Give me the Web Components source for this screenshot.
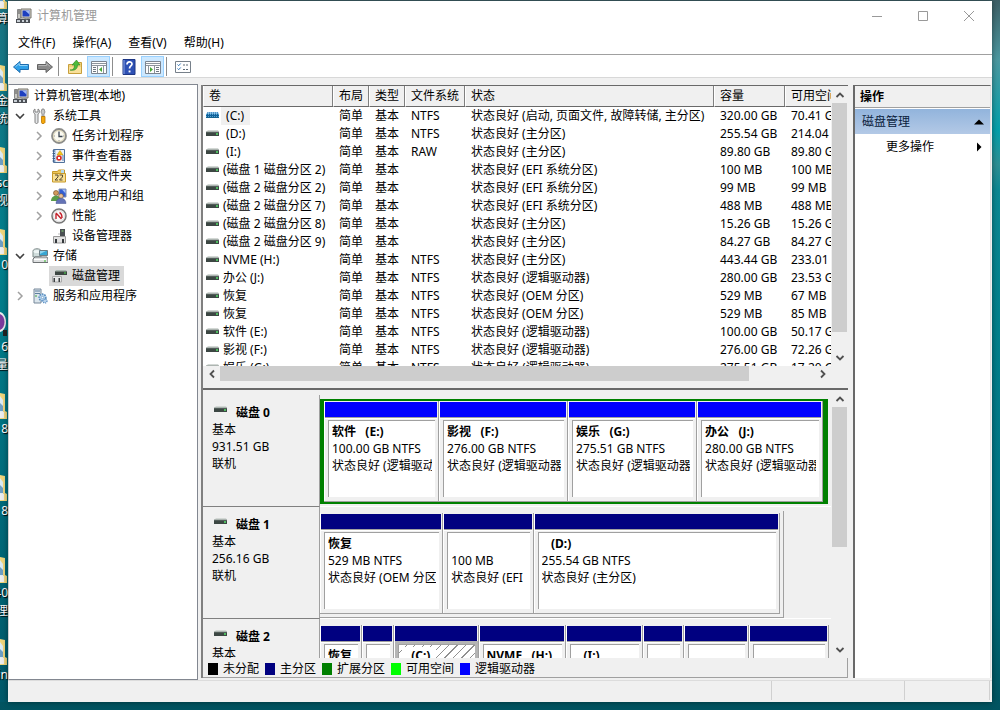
<!DOCTYPE html>
<html lang="zh-CN">
<head>
<meta charset="utf-8">
<title>计算机管理</title>
<style>
html, body { margin: 0; height: 100%; }
body {
  font: 12px/18px "Noto Sans", "Noto Sans CJK SC", sans-serif;
  color: #000;
  overflow: hidden;
}
</style>
</head>
<body>
<desk-top>
  <desk-shortcut slot="shortcuts">算</desk-shortcut>
  <desk-shortcut slot="shortcuts">金<br>统</desk-shortcut>
  <desk-shortcut slot="shortcuts">sc<br>视</desk-shortcut>
  <desk-shortcut slot="shortcuts">10</desk-shortcut>
  <desk-shortcut slot="shortcuts" kind="disc">6<br>量</desk-shortcut>
  <desk-shortcut slot="shortcuts">8</desk-shortcut>
  <desk-shortcut slot="shortcuts">8</desk-shortcut>
  <desk-shortcut slot="shortcuts">40<br>理</desk-shortcut>
  <desk-shortcut slot="shortcuts">in</desk-shortcut>
  <mmc-window>
    <title-bar slot="top">计算机管理</title-bar>
    <menu-bar slot="top"></menu-bar>
    <tool-bar slot="top"></tool-bar>
    <console-tree slot="tree">
      <tree-item icon="computer" level="0">计算机管理(本地)</tree-item>
      <tree-item icon="tools" level="1" state="open">系统工具</tree-item>
      <tree-item icon="clock" level="2" state="closed">任务计划程序</tree-item>
      <tree-item icon="events" level="2" state="closed">事件查看器</tree-item>
      <tree-item icon="share" level="2" state="closed">共享文件夹</tree-item>
      <tree-item icon="users" level="2" state="closed">本地用户和组</tree-item>
      <tree-item icon="perf" level="2" state="closed">性能</tree-item>
      <tree-item icon="devices" level="2">设备管理器</tree-item>
      <tree-item icon="storage" level="1" state="open">存储</tree-item>
      <tree-item icon="diskmgmt" level="2" selected>磁盘管理</tree-item>
      <tree-item icon="services" level="1" state="closed">服务和应用程序</tree-item>
    </console-tree>
    <volume-list slot="main"></volume-list>
    <disk-graph slot="main">
      <disk-row name="磁盘 0" size="931.51 GB" layout="extended">
        <disk-volume kind="logical" share="115" name="软件   (E:)" size="100.00 GB NTFS" status="状态良好 (逻辑驱动器)"></disk-volume>
        <disk-volume kind="logical" share="129" name="影视   (F:)" size="276.00 GB NTFS" status="状态良好 (逻辑驱动器)"></disk-volume>
        <disk-volume kind="logical" share="129" name="娱乐   (G:)" size="275.51 GB NTFS" status="状态良好 (逻辑驱动器)"></disk-volume>
        <disk-volume kind="logical" share="126" name="办公   (J:)" size="280.00 GB NTFS" status="状态良好 (逻辑驱动器)"></disk-volume>
      </disk-row>
      <disk-row name="磁盘 1" size="256.16 GB" layout="short">
        <disk-volume share="123" name="恢复" size="529 MB NTFS" status="状态良好 (OEM 分区)"></disk-volume>
        <disk-volume share="90" name=" " size="100 MB" status="状态良好 (EFI "></disk-volume>
        <disk-volume share="247" name="   (D:)" size="255.54 GB NTFS" status="状态良好 (主分区)"></disk-volume>
      </disk-row>
      <disk-row name="磁盘 2" layout="full">
        <disk-volume share="42" name="恢复"></disk-volume>
        <disk-volume share="31"></disk-volume>
        <disk-volume share="85" name="   (C:)" selected></disk-volume>
        <disk-volume share="88" name="NVME   (H:)"></disk-volume>
        <disk-volume share="77" name="   (I:)"></disk-volume>
        <disk-volume share="41"></disk-volume>
        <disk-volume share="65"></disk-volume>
        <disk-volume share="80"></disk-volume>
      </disk-row>
    </disk-graph>
    <action-pane slot="actions"></action-pane>
  </mmc-window>
</desk-top>

<script>
function define(name, html, setup) {
  const template = document.createElement('template');
  template.innerHTML = html.trim();
  customElements.define(name, class extends HTMLElement {
    connectedCallback() {
      if (this.shadowRoot) return;
      this.attachShadow({ mode: 'open' }).append(template.content.cloneNode(true));
      if (setup) setup(this, this.shadowRoot);
    }
  });
}

const ICONS = {
  computer: `<path d="M5 1h10v9H5z" fill="#d8d4c8" stroke="#77756c"/><path d="M6.500 2.500h7v6h-7z" fill="#1d3fc0"/><path d="M9 2.500h4.500v4z" fill="#9fb8f2"/><path d="M1.500 1.500h3v9h-3z" fill="#c9c9c4" stroke="#888"/><path d="M2 3h2M2 5h2" stroke="#555"/><path d="M0 11h14v4H0z" fill="#4b4f55"/><path d="M1 12h3v2H1zM6 12h2v2H6zM10 12h2v2h-2z" fill="#c9d0d6"/><path d="M7 9l3 2 4-1" stroke="#8a8d90" fill="none"/>`,
  tools: `<path d="M3 1C1 2 1 5 3 6v8c0 2 3 2 3 0V6c2-1 2-4 0-5v3H3z" fill="#e4e6e8" stroke="#777" stroke-width=".9"/><path d="M10 1h2l1 3-1 2v3h-2V6L9 4z" fill="#c8c8c8" stroke="#777" stroke-width=".7"/><path d="M9.500 8.500h3.500v6l-1 1h-2l-.5-1z" fill="#f5a70b" stroke="#b97500" stroke-width=".8"/>`,
  clock: `<circle cx="8" cy="8" r="7" fill="#f5f1df" stroke="#8d8d8a" stroke-width="1.800"/><circle cx="8" cy="8" r="5.500" fill="#fbfaf1" stroke="#c7bd96" stroke-width=".6"/><path d="M8 3.500V8.500h3.500" fill="none" stroke="#3b4653" stroke-width="1.300"/><path d="M3 8h1M12 8h1M8 12v1" stroke="#999"/>`,
  events: `<path d="M2.500 1.500h11v13h-11z" fill="#b9d0e9" stroke="#50719b"/><path d="M5 2h8v12H5z" fill="#eef2f7"/><path d="M1.500 3h2.500M1.500 5.500h2.500M1.500 8h2.500M1.500 10.500h2.500M1.500 13h2.500" stroke="#3c5c88"/><path d="M9 2.500l3 4.500H6z" fill="#f3c61c" stroke="#b68900" stroke-width=".5"/><circle cx="8" cy="10" r="2.800" fill="#d8302d"/><path d="M7 9l2 2M9 9l-2 2" stroke="#fff"/><path d="M11 8h2M11 10h2M11 12h2" stroke="#557ab5"/>`,
  share: `<path d="M1.500 3.500h5l1-1.500h6v11.500h-12z" fill="#ecc65b" stroke="#c79a2b"/><path d="M1.500 5.500h13v8.500h-13z" fill="#f8df93" stroke="#c79a2b"/><path d="M10 2h3v3h-3z" fill="#b4d9ec"/><path d="M4 7h3v2l-3 3h3M8.500 7h3v2l-3 3h3" stroke="#564b35" fill="none"/>`,
  users: `<path d="M8 1h7v8H8z" fill="#345fd4" stroke="#8190b0"/><path d="M11 1.500h3.500v4z" fill="#a3c0f5"/><circle cx="5" cy="5" r="2.500" fill="#d29a5c" stroke="#644425" stroke-width=".6"/><path d="M0 13c0-7 10-7 10 0z" fill="#5a9c49"/><circle cx="10" cy="8" r="2.300" fill="#edc49b" stroke="#76532c" stroke-width=".6"/><path d="M5 15.500c0-7 10-7 10 0z" fill="#6473b6" stroke="#43528f" stroke-width=".5"/>`,
  perf: `<circle cx="8" cy="8" r="7" fill="#fff" stroke="#777" stroke-width="1.500"/><circle cx="8" cy="8" r="5.500" fill="#fafafa" stroke="#b8b8b8" stroke-width=".5"/><path d="M5 11V5.500M5 5l5.500 6M8.500 4.500c2 1 2.500 3 2.500 5.500" fill="none" stroke="#c3202b" stroke-width="1.400"/>`,
  devices: `<path d="M9 1h5v7H9z" fill="#4b5053"/><path d="M10.500 3h2" stroke="#8ee07c"/><path d="M2.500 8.500h12v6.500h-12z" fill="#e2e2e2" stroke="#9a9a9a"/><path d="M4 11h2v4H4zM11 11h2v4h-2z" fill="#34383c"/><path d="M7 6h2" stroke="#bbb"/>`,
  storage: `<path d="M1 3c0-3 8-3 8 0v6H1z" fill="#cfdcdb" stroke="#7f8b8b"/><ellipse cx="5" cy="3.500" rx="3.500" ry="1.500" fill="#eef5f5"/><path d="M7.500 2.500h8v5h-8z" fill="#37a6d3" stroke="#6a7c84"/><path d="M8 3h6l-6 3z" fill="#8fd4ee"/><path d="M3 9h12l1 2v3.500H1V11z" fill="#dfe1e2" stroke="#6e7274"/><path d="M2 11.500h12" stroke="#fff"/><path d="M12 13h2" stroke="#34b82c"/>`,
  diskmgmt: `<path d="M4 3h12v4H4z" fill="#3c4541"/><path d="M5 2h10l1 1.500H4z" fill="#a9b5ae"/><path d="M13 5h2" stroke="#4fdc4f"/><path d="M1.500 8.500h9v5.500h-9z" fill="#e7e7e7" stroke="#aaa"/><path d="M2.500 10h1.500v4H2.500zM7.500 10h1.500v4H7.500z" fill="#3b3e40"/>`,
  services: `<path d="M2 1h7v14H2z" fill="#dbe5ec" stroke="#76889a"/><path d="M3 3h5M3 5.500h5" stroke="#5e7f9f"/><path d="M3 8h2" stroke="#3da63d"/><circle cx="10.500" cy="9.500" r="3.400" fill="#b7d3ec" stroke="#5389bd" stroke-width="1.500" stroke-dasharray="1.500 1"/><circle cx="10.500" cy="9.500" r="1.200" fill="#fff" stroke="#5389bd" stroke-width=".6"/><circle cx="13" cy="13" r="2" fill="#b7d3ec" stroke="#5389bd" stroke-width="1.200" stroke-dasharray="1 .8"/>`,
  back: `<path d="M0.500 8L7 2.500V5.500h8.500v5H7v3z" fill="#2fa0e8" stroke="#1d6cae"/><path d="M2.500 7.700L6.300 4.500V6.500h8.200" fill="none" stroke="#8fd2f8"/>`,
  forward: `<path d="M15.500 8L9 2.500V5.500H.5v5H9v3z" fill="#8b8b8b" stroke="#626262"/><path d="M1.500 6.500h8.200v-2l3.500 3" fill="none" stroke="#b5b5b5"/>`,
  up: `<path d="M1.500 5.500h5l1-2h7v11h-13z" fill="#f2d27a" stroke="#c79f3c"/><path d="M2 8h12v6H2z" fill="#f8e09a"/><path d="M3 11c3.500 0 4.500-2 4.500-5H5L9.500 1l3.500 5h-2.500C10.500 10 8 12 3 11z" fill="#4dbb3b" stroke="#2c8722" stroke-width=".6"/>`,
  paneLeft: `<path d="M.5 2.500h15v12H.5z" fill="#fdfdfd" stroke="#7b8490"/><path d="M1 4.500h14M1 6.500h14" stroke="#8d949c"/><path d="M2 8.500h3M2 10.500h3M2 12.500h3" stroke="#6f7781"/><path d="M6.500 7v7M12.500 7v7" stroke="#8d949c"/><path d="M11 8v5L8 10.500z" fill="#46a934"/>`,
  paneRight: `<path d="M.5 2.500h15v12H.5z" fill="#fdfdfd" stroke="#7b8490"/><path d="M1 4.500h14M1 6.500h14" stroke="#8d949c"/><path d="M11 8.500h3M11 10.500h3M11 12.500h3" stroke="#6f7781"/><path d="M9.500 7v7M3.500 7v7" stroke="#8d949c"/><path d="M5 8v5l3-2.500z" fill="#46a934"/>`,
  help: `<path d="M2 .5h12v15H2z" fill="#2d50b4" stroke="#1d3684"/><path d="M3 1v14" stroke="#8ba4e4"/><path d="M6 5.500c0-3.500 5-3.500 5-.5 0 2-2.500 2-2.500 4.500" fill="none" stroke="#fff" stroke-width="1.700"/><path d="M7.600 11.500h1.900v1.900H7.600z" fill="#fff"/>`,
  props: `<path d="M.5 2.500h15v11H.5z" fill="#fff" stroke="#77808a"/><path d="M2.500 5.500l1.200 1.200 2-2.200M2.500 9.500l1.200 1.200 2-2.200" fill="none" stroke="#2e75b9"/><path d="M8 6h2M11 6h2M8 10.500h2M11 10.500h2" stroke="#5c6a77"/>`,
  drive: `<path d="M3 4h10l1 2H1z" fill="#d3d8d5"/><path d="M1 6h13v4H1z" fill="#3c4743"/><path d="M1 6h13" stroke="#75807b" stroke-width=".8"/><path d="M11 8h2" stroke="#54e168" stroke-width="1.300"/>`,
  driveSelected: `<path d="M3 4h10l1 2H1z" fill="#8cc4e6"/><path d="M1 6h13v4H1z" fill="#17628f"/><path d="M1 6.500h13M1 8.500h13" stroke="#4da3d8" stroke-dasharray="1 1"/><path d="M2 5h12M2 7.500h12" stroke="#0c5fa8" stroke-dasharray="1 1"/>`,
  chevronDown: `<path d="M4 6l4 4 4-4" fill="none" stroke="#404040" stroke-width="1.600"/>`,
  chevronRight: `<path d="M6 4l4 4-4 4" fill="none" stroke="#a0a0a0" stroke-width="1.500"/>`,
  arrowUp: `<path d="M4.500 10L8 6.500 11.500 10" fill="none" stroke="#505050" stroke-width="1.800"/>`,
  arrowDown: `<path d="M4.500 6L8 9.500 11.500 6" fill="none" stroke="#505050" stroke-width="1.800"/>`,
  arrowLeft: `<path d="M10 4.500L6.500 8l3.500 3.500" fill="none" stroke="#505050" stroke-width="1.800"/>`,
  arrowRight: `<path d="M6 4.500L9.500 8 6 11.500" fill="none" stroke="#505050" stroke-width="1.800"/>`,
  solidUp: `<path d="M8 5.500l5 5H3z" fill="#000"/>`,
  solidRight: `<path d="M6 3.500l4.500 4.500L6 12.500z" fill="#000"/>`,
  minimize: `<path d="M3 8.500h10" stroke="#999"/>`,
  maximize: `<path d="M3.500 3.500h9v9h-9z" fill="none" stroke="#999"/>`,
  close: `<path d="M3 3l10 10M13 3L3 13" stroke="#999"/>`
};

define('mmc-icon', `
<style>:host { display: block; flex: none; width: 16px; height: 16px; } svg { display: block; }</style>`,
(el, root) => {
  root.innerHTML += `<svg width="16" height="16" viewBox="0 0 16 16" aria-hidden="true">${ICONS[el.getAttribute('name')]}</svg>`;
});

define('desk-top', `
<style>
:host {
  display: grid; grid-template-columns: 8px 1fr; box-sizing: border-box; height: 100vh; overflow: hidden;
  padding: 1px 8px 8px 0;
  background: linear-gradient(180deg, #3d5f66 0, #4c99a1 60px, #04a0aa 130px, #2d8f94 165px, #0c8893 190px, #03808c 330px, #017585 480px, #016673 610px, #015360 710px);
}
.icons { min-height: 0; overflow: hidden; margin-top: -19px; background: linear-gradient(#1d7382, #007f8d 40%, #00596a); }
.main { display: grid; min-width: 0; min-height: 0; }
</style>
<div class="icons"><slot name="shortcuts"></slot></div>
<div class="main"><slot></slot></div>`);

define('desk-shortcut', `
<style>
:host { display: flex; flex-direction: column; align-items: flex-end; height: 82px; color: #fff; text-shadow: 1px 1px 1px #000; }
svg { flex: none; display: block; }
.label { text-align: right; white-space: nowrap; }
</style>
<svg width="8" height="28" viewBox="0 0 8 28" aria-hidden="true"></svg>
<div class="label"><slot></slot></div>`,
(el, root) => {
  root.querySelector('svg').innerHTML = el.getAttribute('kind') === 'disc'
    ? `<path d="M0 2c8 2 8 18 0 20z" fill="#eee"/><path d="M0 4c6 2 6 14 0 16z" fill="#7b3c9e"/><path d="M3 20h4v6H3z" fill="#222"/>`
    : `<path d="M0 1l5 1v17l2 1v7H0z" fill="#f1d67c"/><path d="M0 4l3 4v12H0z" fill="#dcebf5"/><path d="M0 11l3 3v5H0z" fill="#6f9fc4"/><path d="M0 20h4v6H0z" fill="#eee"/>`;
});

define('mmc-window', `
<style>
:host { display: flex; flex-direction: column; min-width: 0; min-height: 0; background: #f0f0f0; box-shadow: 0 0 6px rgba(0,0,0,.45); }
.body { flex: 1; display: grid; grid-template-columns: 190px minmax(0, 1fr) 138px; min-height: 0; padding: 6px 1px 0 0; }
.tree, .center, .actions { display: grid; min-width: 0; min-height: 0; }
.center { grid-template-rows: 305fr 288fr; margin: 1px 5px 2px 3px; border-left: 2px solid #808080; }
.actions { margin: 1px 0 2px; }
footer { flex: none; display: flex; justify-content: flex-end; height: 21px; border-top: 1px solid #dcdcdc; background: #f0f0f0; }
footer span { box-sizing: border-box; height: 19px; border-left: 1px solid #d0d0d0; }
.a { width: 133px; } .b { width: 85px; } .c { width: 3px; }
</style>
<slot name="top"></slot>
<div class="body">
  <div class="tree"><slot name="tree"></slot></div>
  <div class="center"><slot name="main"></slot></div>
  <div class="actions"><slot name="actions"></slot></div>
</div>
<footer><span class="a"></span><span class="b"></span><span class="c"></span></footer>`);

define('title-bar', `
<style>
:host { display: flex; align-items: center; flex: none; height: 30px; background: #fff; color: #999; }
.title { flex: 1; margin-left: 5px; }
mmc-icon.app { margin-left: 8px; }
button { display: grid; place-items: center; width: 46px; height: 30px; padding: 0; border: 0; background: none; }
</style>
<mmc-icon class="app" name="computer"></mmc-icon>
<div class="title"><slot></slot></div>
<button aria-label="最小化"><mmc-icon name="minimize"></mmc-icon></button>
<button aria-label="最大化"><mmc-icon name="maximize"></mmc-icon></button>
<button aria-label="关闭"><mmc-icon name="close"></mmc-icon></button>`);

define('menu-bar', `
<style>
:host { display: flex; flex: none; gap: 1px; box-sizing: border-box; height: 24px; padding-left: 2px; background: #fff; border-bottom: 1px solid #a0a0a0; }
button { padding: 0 8px; border: 0; background: none; font: inherit; color: inherit; }
</style>
<button>文件(F)</button><button>操作(A)</button><button>查看(V)</button><button>帮助(H)</button>`);

define('tool-bar', `
<style>
:host { display: flex; flex: none; gap: 1px; box-sizing: border-box; height: 23px; padding: 1px 0 0 1px; background: #fff; border-bottom: 1px solid #d8d8d8; }
button { display: grid; place-items: center; box-sizing: border-box; width: 23px; height: 21px; padding: 0; border: 1px solid transparent; background: none; }
button[aria-pressed] { background: #cce8ff; border-color: #99d1ff; }
i { box-sizing: border-box; width: 5px; height: 19px; border-left: 1px solid #8d8d8d; margin: 1px -1px 0 1px; }
</style>
<button aria-label="后退"><mmc-icon name="back"></mmc-icon></button>
<button aria-label="前进"><mmc-icon name="forward"></mmc-icon></button>
<i></i>
<button aria-label="上移一级"><mmc-icon name="up"></mmc-icon></button>
<button aria-label="显示控制台树" aria-pressed="true"><mmc-icon name="paneLeft"></mmc-icon></button>
<i></i>
<button aria-label="帮助"><mmc-icon name="help"></mmc-icon></button>
<button aria-label="显示操作窗格" aria-pressed="true"><mmc-icon name="paneRight"></mmc-icon></button>
<i></i>
<button aria-label="属性"><mmc-icon name="props"></mmc-icon></button>`);

define('console-tree', `
<style>
:host { display: block; min-height: 0; overflow: hidden; background: #fff; border: 1px solid #828790; border-left-color: #d0d0d0; padding-top: 1px; }
</style>
<slot></slot>`, el => el.setAttribute('role', 'tree'));

define('tree-item', `
<style>
:host { display: flex; align-items: center; height: 20px; }
:host([level="0"]) { padding-left: 4px; }
:host([level="1"]) { padding-left: 3px; }
:host([level="2"]) { padding-left: 22px; }
.twist { flex: none; width: 16px; height: 16px; margin-right: 4px; }
:host([level="0"]) .twist { display: none; }
.node { display: flex; align-items: center; height: 20px; padding: 0 4px 0 0; white-space: nowrap; }
.node span { margin-left: 5px; }
:host([level="2"]) .node { margin-left: -2px; padding-left: 2px; }
:host([selected]) .node { background: #d9d9d9; }
</style>
<div class="twist"></div><div class="node"><mmc-icon></mmc-icon><span><slot></slot></span></div>`,
(el, root) => {
  el.setAttribute('role', 'treeitem');
  const icon = document.createElement('mmc-icon');
  icon.setAttribute('name', el.getAttribute('icon'));
  root.querySelector('mmc-icon').replaceWith(icon);
  const state = el.getAttribute('state');
  if (state) {
    el.setAttribute('aria-expanded', String(state === 'open'));
    root.querySelector('.twist').innerHTML = `<mmc-icon name="${state === 'open' ? 'chevronDown' : 'chevronRight'}"></mmc-icon>`;
  }
});

define('scroll-strip', `
<style>
:host { display: flex; flex-direction: column; width: 17px; min-height: 0; background: #f0f0f0; }
:host([horizontal]) { flex-direction: row; width: auto; height: 16px; }
button { flex: none; display: grid; place-items: center; width: 17px; height: 17px; padding: 0; border: 0; background: none; }
:host([horizontal]) button { height: 16px; }
.track { flex: 1; min-height: 0; min-width: 0; padding: 0 1px; }
:host([horizontal]) .track { padding: 0; }
.thumb { height: var(--extent); background: #cdcdcd; }
:host([horizontal]) .thumb { width: var(--extent); height: 15px; }
</style>`,
(el, root) => {
  const [a, b] = el.hasAttribute('horizontal') ? ['Left', 'Right'] : ['Up', 'Down'];
  root.innerHTML += `<button tabindex="-1" aria-label="${a}"><mmc-icon name="arrow${a}"></mmc-icon></button>
    <div class="track"><div class="thumb"></div></div>
    <button tabindex="-1" aria-label="${b}"><mmc-icon name="arrow${b}"></mmc-icon></button>`;
});

const VOLUMES = [
  [' (C:)', 'NTFS', '启动, 页面文件, 故障转储, 主分区', '320.00 GB', '70.41 GB'],
  [' (D:)', 'NTFS', '主分区', '255.54 GB', '214.04 GB'],
  [' (I:)', 'RAW', '主分区', '89.80 GB', '89.80 GB'],
  ['(磁盘 1 磁盘分区 2)', '', 'EFI 系统分区', '100 MB', '100 MB'],
  ['(磁盘 2 磁盘分区 2)', '', 'EFI 系统分区', '99 MB', '99 MB'],
  ['(磁盘 2 磁盘分区 7)', '', 'EFI 系统分区', '488 MB', '488 MB'],
  ['(磁盘 2 磁盘分区 8)', '', '主分区', '15.26 GB', '15.26 GB'],
  ['(磁盘 2 磁盘分区 9)', '', '主分区', '84.27 GB', '84.27 GB'],
  ['NVME (H:)', 'NTFS', '主分区', '443.44 GB', '233.01 GB'],
  ['办公 (J:)', 'NTFS', '逻辑驱动器', '280.00 GB', '23.53 GB'],
  ['恢复', 'NTFS', 'OEM 分区', '529 MB', '67 MB'],
  ['恢复', 'NTFS', 'OEM 分区', '529 MB', '85 MB'],
  ['软件 (E:)', 'NTFS', '逻辑驱动器', '100.00 GB', '50.17 GB'],
  ['影视 (F:)', 'NTFS', '逻辑驱动器', '276.00 GB', '72.26 GB'],
  ['娱乐 (G:)', 'NTFS', '逻辑驱动器', '275.51 GB', '17.20 GB']
];

define('volume-list', `
<style>
:host {
  display: grid; grid-template: minmax(0, 1fr) 16px / minmax(0, 1fr) 17px; box-sizing: border-box; min-height: 0;
  border-top: 1px solid #696969; border-bottom: 2px solid #696969; padding-bottom: 6px; background: #f0f0f0;
}
.view { overflow: hidden; background: #fff; }
table { table-layout: fixed; border-collapse: separate; border-spacing: 0; width: 672px; }
th { box-sizing: border-box; height: 21px; padding: 0 0 0 5px; text-align: left; font-weight: normal; background: #f0f0f0; border-left: 1px solid #fff; border-bottom: 1px solid #696969; box-shadow: inset -1px 0 #808080; }
td { height: 18px; padding: 0 0 0 6px; white-space: pre; overflow: hidden; }
td:first-child { padding-left: 2px; }
.name { display: flex; align-items: center; height: 18px; }
.name span { padding: 0 2px; }
tr.sel .name span { background: #f0f0f0; padding-right: 6px; }
</style>
<div class="view"><table>
<colgroup><col style="width:130px"><col style="width:36px"><col style="width:36px"><col style="width:60px"><col style="width:249px"><col style="width:71px"><col style="width:90px"></colgroup>
<thead><tr><th>卷</th><th>布局</th><th>类型</th><th>文件系统</th><th>状态</th><th>容量</th><th>可用空间</th></tr></thead>
<tbody></tbody></table></div>
<scroll-strip style="--extent:93%"></scroll-strip>
<scroll-strip horizontal style="--extent:89%"></scroll-strip>`,
(el, root) => {
  root.querySelector('tbody').innerHTML = VOLUMES.map(([name, fs, kind, size, free], i) =>
    `<tr${i ? '' : ' class="sel"'}><td><div class="name"><mmc-icon name="${i ? 'drive' : 'driveSelected'}"></mmc-icon><span>${name}</span></div></td><td>简单</td><td>基本</td><td>${fs}</td><td>状态良好 (${kind})</td><td>${size}</td><td>${free}</td></tr>`).join('');
});

define('disk-graph', `
<style>
:host { display: grid; grid-template: minmax(0, 1fr) 20px / minmax(0, 1fr) 17px; box-sizing: border-box; min-height: 0; background: #f0f0f0; }
.view { overflow: hidden; padding: 5px 0 0 0; }
.legend { grid-column: 1 / 3; display: flex; align-items: center; gap: 6px; padding: 2px 0 0 5px; border: solid #a0a0a0; border-width: 0 1px 1px 0; white-space: nowrap; }
.legend span { display: flex; align-items: center; gap: 5px; }
.legend span::before { content: ""; width: 10px; height: 12px; background: var(--swatch); }
</style>
<div class="view"><slot></slot></div>
<scroll-strip style="--extent:60%"></scroll-strip>
<div class="legend">
  <span style="--swatch:#000">未分配</span><span style="--swatch:#000080">主分区</span><span style="--swatch:#008000">扩展分区</span><span style="--swatch:#00ff00">可用空间</span><span style="--swatch:#0000ff">逻辑驱动器</span>
</div>`);

define('disk-row', `
<style>
:host { display: grid; grid-template-columns: 117px minmax(0, 1fr); height: 112px; line-height: 17px; }
.label { box-sizing: border-box; padding: 9px 0 0 9px; border: solid #a0a0a0; border-width: 0 1px 1px 0; border-bottom-color: #808080; }
.head { display: flex; gap: 7px; font-weight: bold; }
.head mmc-icon { margin-left: 1px; margin-top: -2px; }
.area { border-bottom: 1px solid #fff; }
.band { display: flex; box-sizing: border-box; margin-top: 4px; border: solid #a0a0a0; border-width: 0 1px 1px 0; padding: 2px 3px 3px 0; }
:host([layout="extended"]) .band { border-color: #008000; border-width: 2px 5px 2px 4px; padding: 0; margin-right: 3px; }
:host([layout="short"]) .band { margin-right: 47px; }
:host([layout="full"]) .band { border-right: 0; padding-right: 2px; }
</style>
<div class="label"><div class="head"><mmc-icon name="drive"></mmc-icon><span class="name"></span></div><div>基本</div><div class="size"></div><div class="state">联机</div></div>
<div class="area"><div class="band"><slot></slot></div></div>`,
(el, root) => {
  root.querySelector('.name').textContent = el.getAttribute('name');
  const size = el.getAttribute('size');
  root.querySelector('.size').textContent = size || '';
  if (!size) root.querySelector('.state').remove();
});

define('disk-volume', `
<style>
:host { display: flex; flex-direction: column; box-sizing: border-box; min-width: 0; height: 101px; border: solid #a0a0a0; border-width: 0 1px 1px 0; box-shadow: inset 1px 0 #fff; }
.bar { flex: none; height: 15px; margin: 1px 1px 0 1px; background: #000080; box-shadow: 0 1px #a0a0a0, 0 2px #fff; }
:host([kind="logical"]) .bar { background: #0000ff; }
.face { flex: 1; min-height: 0; margin: 3px 3px 4px 4px; padding: 2px 3px 0; background: #fff; border: solid #a0a0a0; border-width: 1px 0 0 1px; }
.text { overflow: hidden; white-space: pre; }
.name { font-weight: bold; min-height: 17px; }
:host([selected]) .face { background: repeating-linear-gradient(135deg, #fff 0 5px, #909090 5px 6px); outline: 3px solid #b4b4b4; }
:host([selected]) .name span { background: #fff; padding-right: 6px; }
</style>
<div class="bar"></div>
<div class="face"><div class="text"><div class="name"><span></span></div><div class="size"></div><div class="status"></div></div></div>`,
(el, root) => {
  el.style.flex = `${el.getAttribute('share')} 1 0`;
  root.querySelector('.name span').textContent = el.getAttribute('name') || '';
  root.querySelector('.size').textContent = el.getAttribute('size') || '';
  root.querySelector('.status').textContent = el.getAttribute('status') || '';
});

define('action-pane', `
<style>
:host { display: block; box-sizing: border-box; min-height: 0; background: #fff; border: solid #696969; border-width: 1px 1px 0 2px; border-right-color: #e0e0e0; }
h2 { margin: 0; box-sizing: border-box; height: 22px; padding: 2px 0 0 5px; font-size: 12px; background: #f0f0f0; border-bottom: 1px solid #a0a0a0; }
button { display: flex; align-items: center; width: 100%; height: 24px; padding: 1px 3px 0 7px; border: 0; background: none; font: inherit; color: inherit; text-align: left; }
button span { flex: 1; }
.group { height: 25px; margin-top: 1px; background: linear-gradient(#92b4dc, #b3c9e6); color: #0a1c3c; }
.more { padding-left: 31px; }
</style>
<h2>操作</h2>
<button class="group"><span>磁盘管理</span><mmc-icon name="solidUp"></mmc-icon></button>
<button class="more"><span>更多操作</span><mmc-icon name="solidRight"></mmc-icon></button>`);
</script>
</body>
</html>
